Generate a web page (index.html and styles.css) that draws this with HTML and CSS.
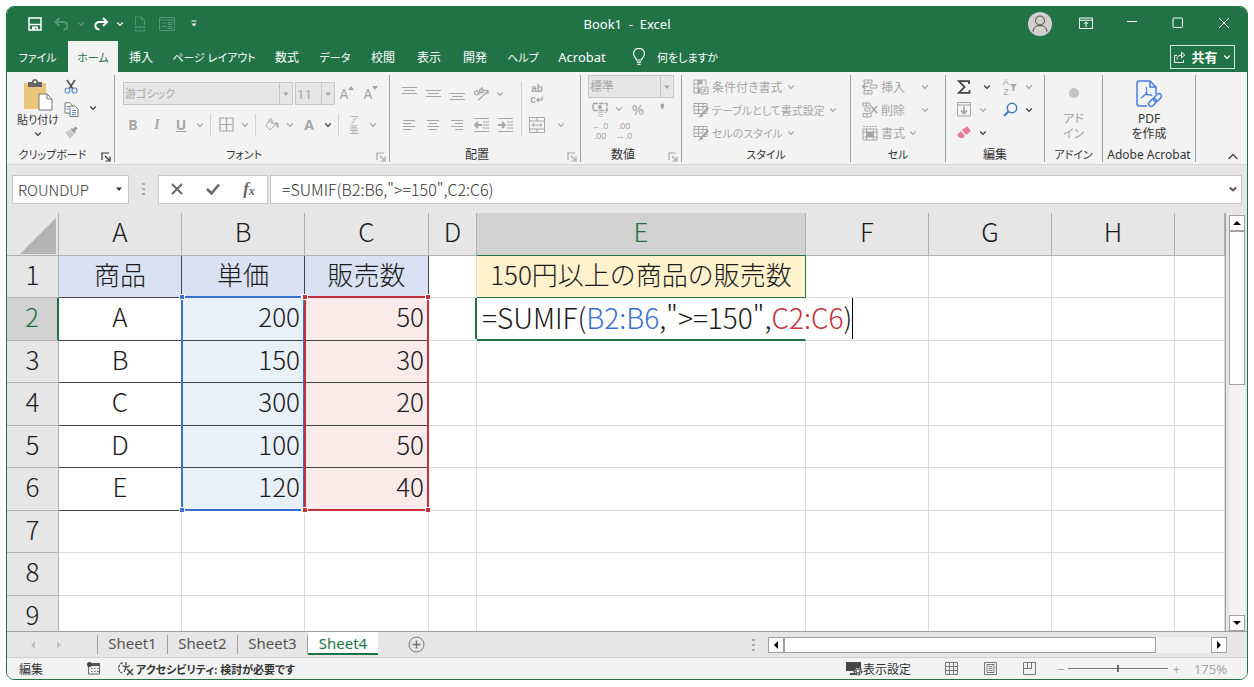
FILE: index.html
```html
<!DOCTYPE html>
<html lang="ja">
<head>
    <meta charset="UTF-8">
    <meta name="viewport" content="width=device-width, initial-scale=1.0">
    <title>Book1 - Excel</title>
    <link rel="stylesheet" href="styles.css">
</head>
<body>

    <!-- shared icons -->
    <svg class="defs" aria-hidden="true">
        <symbol id="chev" viewBox="0 0 8 8"><path d="M1.2 2.5 4 5.3 6.8 2.5" fill="none" stroke="currentColor" stroke-width="1.2"/></symbol>
        <symbol id="tri" viewBox="0 0 8 8"><path d="M1 2.5h6L4 6z" fill="currentColor"/></symbol>
        <symbol id="launch" viewBox="0 0 10 10"><path d="M1 8V1h7M4 4l4 4M9 4.500V9H4.500" fill="none" stroke="currentColor" stroke-width="1.2"/></symbol>
        <symbol id="table-brush" viewBox="0 0 16 16"><path d="M1 1.500h13v10H1zM1 4.500h13M1 8h9M5.500 1.500v10M10 1.500v6" fill="none" stroke="currentColor"/><path d="M14.500 4.500 16 6l-5 6-2-1.500zM8.500 11l2 1.800C10 15 8 15.500 5 15.500c2-1 2-3.500 3.500-4.500z" fill="currentColor"/></symbol>
    </svg>

    <div class="window">
        <header class="titlebar">
            <div class="quick">
                <button aria-label="上書き保存" class="tool"><svg width="14" height="14" viewBox="0 0 14 14"><path d="M1 1h12v12H1zM1 7.500h12" fill="none" stroke="currentColor" stroke-width="1.500"/><path d="M4 9.500h6V13H8.500v-2H7v2H4z" fill="currentColor"/></svg></button>
                <button aria-label="元に戻す" class="tool faded"><svg width="15" height="14" viewBox="0 0 15 14"><path d="M5.500 1 1.500 5l4 4M2 5h7.500c5 0 5 7.500 0 8" fill="none" stroke="currentColor" stroke-width="1.800"/></svg></button>
                <button aria-label="元に戻すの一覧" class="drop faded"><svg width="8" height="8"><use href="#chev"/></svg></button>
                <button aria-label="やり直し" class="tool"><svg width="16" height="14" viewBox="0 0 16 14"><path d="M10 1l4 4-4 4M14 5H6.500C1 5 1 12 6.500 12.500" fill="none" stroke="currentColor" stroke-width="2"/></svg></button>
                <button aria-label="やり直しの一覧" class="drop"><svg width="8" height="8"><use href="#chev"/></svg></button>
                <button aria-label="PDF" class="tool faded"><svg width="14" height="16" viewBox="0 0 14 16"><path d="M2.500 9V1h6l3 3v5M8.500 1v3h3M2.500 13v2h9v-2M1 11h12M3 9.500v3M7 9.500v3M11 9.500v3" fill="none" stroke="currentColor"/></svg></button>
                <button aria-label="フォーム" class="tool faded"><svg width="16" height="14" viewBox="0 0 16 14"><path d="M.5.5h15v13H.5zM.5 3h15M3 6h4M3 9.500h4M9 5.500h4v2H9zM9 9.500h4v2H9z" fill="none" stroke="currentColor"/></svg></button>
                <button aria-label="クイック アクセスのカスタマイズ" class="tool"><svg width="8" height="8" viewBox="0 0 8 8"><path d="M1.500 1h5" stroke="currentColor"/><path d="M1.500 3.500h5L4 6.500z" fill="currentColor"/></svg></button>
            </div>
            <h1>Book1&nbsp; -&nbsp; Excel</h1>
            <div class="caption">
                <span class="avatar"><svg width="24" height="24" viewBox="0 0 24 24" fill="none" stroke="#444"><circle cx="12" cy="8.500" r="4.500"/><path d="M5 19.500c.5-8 13.500-8 14 0"/></svg></span>
                <button aria-label="リボンの表示オプション"><svg width="14" height="12" viewBox="0 0 14 12" fill="none" stroke="currentColor"><path d="M.5 1h13v10.500H.5zM.5 3.200h13M7 10V5M4.800 7 7 4.800 9.200 7"/></svg></button>
                <button aria-label="最小化"><svg width="12" height="12" viewBox="0 0 12 12"><path d="M1 4.500h10" stroke="currentColor"/></svg></button>
                <button aria-label="最大化"><svg width="12" height="12" viewBox="0 0 12 12"><rect x="1" y="1" width="9.500" height="9.500" rx="1" fill="none" stroke="currentColor"/></svg></button>
                <button aria-label="閉じる"><svg width="12" height="12" viewBox="0 0 12 12"><path d="m1 1 10 10M11 1 1 11" stroke="currentColor"/></svg></button>
            </div>
        </header>

        <nav class="tabs">
            <button class="tab-file kana">ファイル</button>
            <button class="tab-md kana active">ホーム</button>
            <button>挿入</button>
            <button class="tab-wide kana">ページ レイアウト</button>
            <button>数式</button>
            <button class="tab-md kana">データ</button>
            <button>校閲</button>
            <button>表示</button>
            <button>開発</button>
            <button class="tab-md kana">ヘルプ</button>
            <button class="tab-lg">Acrobat</button>
            <button class="tell kana">
                <svg width="14" height="18" viewBox="0 0 14 18" fill="none" stroke="currentColor" stroke-width="1.200"><path d="M4.500 12c0-2-3-3-3-6.200a5.400 5.400 0 0 1 11 0c0 3.200-3 4.200-3 6.200zM4.800 14.200h4.500M5.500 16.300h3"/></svg>
                何をしますか
            </button>
            <button class="share">
                <svg width="12" height="12" viewBox="0 0 12 12" fill="none" stroke="currentColor"><path d="M3 4.500H.5v7h9V9M3 8.500c0-3 2-4.500 5-4.500M7.500 1.200 10.800 4 7.500 6.800V1.200"/></svg>
                共有
                <svg width="8" height="8"><use href="#chev"/></svg>
            </button>
        </nav>

        <section class="ribbon">
            <div class="group clipboard">
                <div class="tools">
                    <button class="paste kana">
                        <svg width="30" height="32" viewBox="0 0 30 32"><path d="M1 4h22v26H1z" fill="#eac57a"/><path d="M5 3h4c0-4 6-4 6 0h4v5H5z" fill="#666"/><circle cx="12" cy="3" r="1.200" fill="#fff"/><path d="M16 15h8l5 5v11H16z" fill="#fff" stroke="#777"/><path d="M24 15v5h5" fill="none" stroke="#777"/></svg>
                        貼り付け
                        <svg width="8" height="8"><use href="#chev"/></svg>
                    </button>
                    <div class="stack">
                        <button aria-label="切り取り"><svg width="14" height="15" viewBox="0 0 14 15" fill="none"><path d="M3 1l6 9M11 1 5 10" stroke="#555" stroke-width="1.600"/><circle cx="3.500" cy="11.500" r="2.500" stroke="#5b8fcb" stroke-width="1.200"/><circle cx="10.500" cy="11.500" r="2.500" stroke="#5b8fcb" stroke-width="1.200"/></svg></button>
                        <button aria-label="コピー"><svg width="15" height="15" viewBox="0 0 15 15" fill="#fff" stroke="#777"><path d="M1 .8h5l2.500 2.500V11H1z"/><path d="M6 4h5l3 3v7.500H6z"/><path d="M2.500 4.500h3M2.500 7h2.500M8 8.500h4M8 10.500h4M8 12.500h4" stroke="#5b8fcb"/></svg></button>
                        <button aria-label="書式のコピー" class="off"><svg width="14" height="13" viewBox="0 0 14 13"><path d="M1 6 6 4l4 4-4 5z" fill="#c8c8c8"/><path d="m6.500 3.500 4 4L12 6l-1-1 2.500-2.500L11.500.5 9 3l-1-1z" fill="#999"/></svg></button>
                    </div>
                    <button aria-label="コピーの一覧" class="drop"><svg width="8" height="8"><use href="#chev"/></svg></button>
                </div>
                <div class="caption-row kana"><span>クリップボード</span><button aria-label="クリップボードの設定"><svg width="10" height="10"><use href="#launch"/></svg></button></div>
            </div>

            <div class="group font off">
                <div class="tools rows">
                    <div class="row">
                        <span class="combo family kana"><select aria-label="フォント" disabled><option>游ゴシック</option></select><svg width="8" height="8"><use href="#tri"/></svg></span>
                        <span class="combo size"><select aria-label="フォント サイズ" disabled><option>11</option></select><svg width="8" height="8"><use href="#tri"/></svg></span>
                        <button class="tool letter">A<svg class="mark" width="6" height="4" viewBox="0 0 6 4"><path d="M0 4h6L3 0z" fill="currentColor"/></svg></button>
                        <button class="tool letter">A<svg class="mark" width="6" height="4" viewBox="0 0 6 4"><path d="M0 0h6L3 4z" fill="currentColor"/></svg></button>
                    </div>
                    <div class="row">
                        <button class="tool letter"><b>B</b></button>
                        <button class="tool letter serif"><i>I</i></button>
                        <button class="tool letter"><b><u>U</u></b></button>
                        <button aria-label="下線の種類" class="drop"><svg width="8" height="8"><use href="#chev"/></svg></button>
                        <span class="sep"></span>
                        <button aria-label="罫線" class="tool"><svg width="15" height="15" viewBox="0 0 15 15"><path d="M1 1h13v13H1zM7.500 1v13M1 7.500h13" fill="none" stroke="currentColor" stroke-width="1.200"/></svg></button>
                        <button aria-label="罫線の種類" class="drop"><svg width="8" height="8"><use href="#chev"/></svg></button>
                        <span class="sep"></span>
                        <button aria-label="塗りつぶし" class="tool"><svg width="15" height="14" viewBox="0 0 15 14" fill="none" stroke="currentColor"><path d="M6 2.500 1.500 7.500l4.500 4.500 5.500-5zM5 5V1.500c1-1.500 3-.5 3 .5v4"/><path d="M11 5c2 0 3 1.500 2.800 4.500" stroke-width="2"/></svg></button>
                        <button aria-label="塗りつぶしの色" class="drop"><svg width="8" height="8"><use href="#chev"/></svg></button>
                        <button class="tool letter"><b>A</b></button>
                        <button aria-label="フォントの色" class="drop on"><svg width="8" height="8"><use href="#chev"/></svg></button>
                        <span class="sep"></span>
                        <button class="tool ruby"><span>ア</span><span>亜</span></button>
                        <button aria-label="ふりがなの設定" class="drop"><svg width="8" height="8"><use href="#chev"/></svg></button>
                    </div>
                </div>
                <div class="caption-row kana"><span>フォント</span><button aria-label="フォントの設定"><svg width="10" height="10"><use href="#launch"/></svg></button></div>
            </div>

            <div class="group align off">
                <div class="tools">
                    <div class="rows">
                        <div class="row">
                            <button aria-label="上揃え" class="tool"><svg width="15" height="15" viewBox="0 0 15 15"><path d="M0 1.500h15M2 4.500h11M0 7.500h15" stroke="currentColor"/></svg></button>
                            <button aria-label="上下中央揃え" class="tool"><svg width="15" height="15" viewBox="0 0 15 15"><path d="M0 4.500h15M2 7.500h11M0 10.500h15" stroke="currentColor"/></svg></button>
                            <button aria-label="下揃え" class="tool"><svg width="15" height="15" viewBox="0 0 15 15"><path d="M0 7.500h15M2 10.500h11M0 13.500h15" stroke="currentColor"/></svg></button>
                            <button aria-label="方向" class="tool"><svg width="16" height="16" viewBox="0 0 16 16" fill="none" stroke="currentColor" stroke-width="1.200"><circle cx="3.500" cy="7" r="2"/><path d="m3.500 4.200 3 4M9 1l-.5 5.500"/><circle cx="8.500" cy="4.800" r="2"/><path d="M5 14.500 15 5M11 4.500h4v4"/></svg></button>
                            <button aria-label="方向の一覧" class="drop"><svg width="8" height="8"><use href="#chev"/></svg></button>
                        </div>
                        <div class="row">
                            <button aria-label="左揃え" class="tool"><svg width="12" height="12" viewBox="0 0 12 12"><path d="M0 1.500h12M0 4.500h8M0 7.500h12M0 10.500h8" stroke="currentColor"/></svg></button>
                            <button aria-label="中央揃え" class="tool"><svg width="12" height="12" viewBox="0 0 12 12"><path d="M0 1.500h12M2 4.500h8M0 7.500h12M2 10.500h8" stroke="currentColor"/></svg></button>
                            <button aria-label="右揃え" class="tool"><svg width="12" height="12" viewBox="0 0 12 12"><path d="M0 1.500h12M4 4.500h8M0 7.500h12M4 10.500h8" stroke="currentColor"/></svg></button>
                            <button aria-label="インデントを減らす" class="tool"><svg width="15" height="14" viewBox="0 0 15 14"><path d="M0 .5h15M9 4h6M9 7h6M9 10h6M0 13.500h15" stroke="currentColor"/><path d="M1 7h7M4 4 1 7l3 3" fill="none" stroke="currentColor" stroke-width="1.800"/></svg></button>
                            <button aria-label="インデントを増やす" class="tool"><svg width="15" height="14" viewBox="0 0 15 14"><path d="M0 .5h15M9 4h6M9 7h6M9 10h6M0 13.500h15" stroke="currentColor"/><path d="M0 7h7M4 4l3 3-3 3" fill="none" stroke="currentColor" stroke-width="1.800"/></svg></button>
                        </div>
                    </div>
                    <span class="sep tall"></span>
                    <div class="rows">
                        <div class="row">
                            <button class="tool wrap"><span>ab</span><span>c↵</span></button>
                        </div>
                        <div class="row">
                            <button aria-label="セルを結合して中央揃え" class="tool"><svg width="16" height="16" viewBox="0 0 16 16" fill="none" stroke="currentColor"><path d="M.5.500h15v15H.5zM.5 4h15M.5 12h15M8 .5V4M8 12v3.500M3 8h10M5 6 3 8l2 2M11 6l2 2-2 2"/></svg></button>
                            <button aria-label="結合の一覧" class="tool"><svg width="8" height="8"><use href="#chev"/></svg></button>
                        </div>
                    </div>
                </div>
                <div class="caption-row"><span>配置</span><button aria-label="配置の設定"><svg width="10" height="10"><use href="#launch"/></svg></button></div>
            </div>

            <div class="group number off">
                <div class="tools list">
                    <span class="combo"><select aria-label="表示形式" disabled><option>標準</option></select><svg width="8" height="8"><use href="#tri"/></svg></span>
                    <div class="row">
                        <button aria-label="通貨表示形式" class="tool"><svg width="16" height="15" viewBox="0 0 16 15"><path d="M1 1.500h14v7H1z" fill="none" stroke="currentColor" stroke-width="1.500" stroke-dasharray="5 1"/><circle cx="8" cy="5" r="2" fill="currentColor"/><path d="M6 10.500h5M6 12.500h5M6 14.500h5M12 10.500h3" stroke="currentColor" opacity=".6"/></svg></button>
                        <button aria-label="通貨の一覧" class="drop"><svg width="8" height="8"><use href="#chev"/></svg></button>
                        <button class="tool pct">%</button>
                        <button class="tool pct"><b>❜</b></button>
                    </div>
                    <div class="row">
                        <button class="tool dec"><span>←.0</span><span>.00</span></button>
                        <button class="tool dec"><span>.00</span><span>→.0</span></button>
                    </div>
                </div>
                <div class="caption-row"><span>数値</span><button aria-label="数値の設定"><svg width="10" height="10"><use href="#launch"/></svg></button></div>
            </div>

            <div class="group styles off">
                <div class="tools list">
                    <button class="item"><svg width="16" height="16" viewBox="0 0 16 16"><path d="M1 1h12v5M1 1v13h6M1 5h6M1 9h6M5 1v13M9 1v5M8 8h7v7H8z" fill="none" stroke="currentColor"/><path d="M5 1h4v4H5zM5 9h2v5H5z" fill="currentColor"/><path d="M9.500 10.500h4M9.500 12.500h4M13 9l-3 5" stroke="currentColor" stroke-width=".8"/></svg>条件付き書式<svg width="8" height="8"><use href="#chev"/></svg></button>
                    <button class="item kana"><svg width="16" height="16"><use href="#table-brush"/></svg>テーブルとして書式設定<svg width="8" height="8"><use href="#chev"/></svg></button>
                    <button class="item kana"><svg width="16" height="16"><use href="#table-brush"/></svg>セルのスタイル<svg width="8" height="8"><use href="#chev"/></svg></button>
                </div>
                <div class="caption-row kana"><span>スタイル</span></div>
            </div>

            <div class="group cells off">
                <div class="tools list">
                    <button class="item spread"><svg width="16" height="16" viewBox="0 0 16 16" fill="none" stroke="currentColor"><path d="M2 1h8v3H2zM6 1v3M2 11.500h8v3.500H2zM6 11.500V15M8 6h7v3H8z"/><path d="M0 7.500h6M3 5 .8 7.500 3 10" stroke-width="1.500"/></svg>挿入<svg width="8" height="8"><use href="#chev"/></svg></button>
                    <button class="item spread"><svg width="16" height="16" viewBox="0 0 16 16" fill="none" stroke="currentColor"><path d="M1 1h7v3H1zM4.500 1v3M1 11.500h8v3.500H1zM5 11.500V15M3 6h5v3H3z"/><path d="m9 4 6 7M15 4 9 11" stroke-width="1.500"/></svg>削除<svg width="8" height="8"><use href="#chev"/></svg></button>
                    <button class="item"><svg width="16" height="16" viewBox="0 0 16 16" fill="none" stroke="currentColor"><path d="M1 1.500h14" stroke-dasharray="2 1"/><path d="M1 4h14v11H1zM1 7h14M1 12h14M4.500 4v11M11.500 4v11"/><path d="M5.500 7.500h5v4h-5z" fill="currentColor"/></svg>書式<svg width="8" height="8"><use href="#chev"/></svg></button>
                </div>
                <div class="caption-row kana"><span>セル</span></div>
            </div>

            <div class="group edit">
                <div class="tools">
                    <div class="list">
                        <div class="row">
                            <button aria-label="合計" class="tool"><svg width="14" height="14" viewBox="0 0 14 14"><path d="M12 4V1.200H2L7.500 7 2 12.800h10.500V10" fill="none" stroke="#444" stroke-width="1.800"/></svg></button>
                            <button aria-label="合計の一覧" class="drop far"><svg width="8" height="8"><use href="#chev"/></svg></button>
                        </div>
                        <div class="row off">
                            <button aria-label="フィル" class="tool"><svg width="14" height="15" viewBox="0 0 14 15" fill="none" stroke="currentColor"><path d="M.5.500h13v13.500H.5zM.5 3h13"/><path d="M7 4.500v7M4 8.500l3 3 3-3" stroke-width="1.800"/></svg></button>
                            <button aria-label="フィルの一覧" class="drop"><svg width="8" height="8"><use href="#chev"/></svg></button>
                        </div>
                        <div class="row">
                            <button aria-label="クリア" class="tool"><svg width="14" height="13" viewBox="0 0 14 13"><path d="m5 4 5-4 4 5-5 4zM4 5l4 5-2 2H3L0 9z" fill="#e57f92"/></svg></button>
                            <button aria-label="クリアの一覧" class="drop"><svg width="8" height="8"><use href="#chev"/></svg></button>
                        </div>
                    </div>
                    <div class="list">
                        <div class="row off">
                            <button class="tool sort"><span class="az"><span>A</span><span>Z</span></span><svg width="7" height="8" viewBox="0 0 7 8"><path d="M0 1h7L4.500 4v4h-2V4z" fill="currentColor"/></svg></button>
                            <button aria-label="並べ替えとフィルター" class="drop"><svg width="8" height="8"><use href="#chev"/></svg></button>
                        </div>
                        <div class="row">
                            <button aria-label="検索と選択" class="tool"><svg width="15" height="15" viewBox="0 0 15 15" fill="none" stroke="#3f78b5"><circle cx="9" cy="6" r="4.700" stroke-width="1.500"/><path d="M5.500 9.500 1 14" stroke-width="2"/></svg></button>
                            <button aria-label="検索の一覧" class="drop"><svg width="8" height="8"><use href="#chev"/></svg></button>
                        </div>
                    </div>
                </div>
                <div class="caption-row"><span>編集</span></div>
            </div>

            <div class="group addin off">
                <div class="tools">
                    <button class="big"><svg width="30" height="30" viewBox="0 0 30 30"><circle cx="15" cy="14" r="5" fill="#c4c4c4"/></svg><span>アド</span><span>イン</span></button>
                </div>
                <div class="caption-row kana"><span>アドイン</span></div>
            </div>

            <div class="group acrobat">
                <div class="tools">
                    <button class="big"><svg width="28" height="30" viewBox="0 0 28 30" fill="none" stroke="#4a7fe0" stroke-width="1.500"><path d="M12 27H4.500C3 27 2 26 2 24.500v-20C2 3 3 2 4.500 2H15l6 6v7M15 2v6h6"/><path d="M11 8c2 5 1 7-5 11M10.500 13c2 3 4 4 7 3M8 17c3-2 5-2 9-1" stroke-width="1.200"/><rect x="20" y="14" width="5" height="9" rx="2.500" transform="rotate(45 22.500 18.500)"/><rect x="15" y="19" width="5" height="9" rx="2.500" transform="rotate(45 17.500 23.500)"/></svg><span>PDF</span><span>を作成</span></button>
                </div>
                <div class="caption-row"><span>Adobe Acrobat</span></div>
            </div>

            <button aria-label="リボンを折りたたむ" class="collapse"><svg width="12" height="8" viewBox="0 0 12 8"><path d="m1.500 6 4.500-4.500L10.500 6" fill="none" stroke="#444" stroke-width="1.300"/></svg></button>
        </section>

        <section class="formula-bar">
            <div class="name-box">
                <input type="text" aria-label="名前ボックス" value="ROUNDUP">
                <svg width="8" height="8"><use href="#tri"/></svg>
            </div>
            <span class="grip"></span>
            <div class="fx-buttons">
                <button aria-label="キャンセル"><svg width="12" height="12" viewBox="0 0 12 12"><path d="m1 1 10 10M11 1 1 11" stroke="#666" stroke-width="2"/></svg></button>
                <button aria-label="入力"><svg width="14" height="12" viewBox="0 0 14 12"><path d="m1 6 4.500 4.500L13 1.500" fill="none" stroke="#666" stroke-width="2.500"/></svg></button>
                <button class="fx">f<small>x</small></button>
            </div>
            <div class="formula">
                <input type="text" aria-label="数式バー" value='=SUMIF(B2:B6,"&gt;=150",C2:C6)'>
                <svg width="8" height="8" viewBox="0 0 8 8"><path d="M.8 2.500 4 5.500l3.200-3" fill="none" stroke="#555" stroke-width="2"/></svg>
            </div>
        </section>

        <main class="sheet">
            <div class="cells-area">
                <table>
                    <colgroup>
                        <col class="c-head"><col class="c"><col class="c"><col class="c-c"><col class="c-d"><col class="c-e"><col class="c"><col class="c"><col class="c"><col>
                    </colgroup>
                    <thead>
                        <tr>
                            <th class="corner"><svg width="36" height="36" viewBox="0 0 36 36"><path d="M36 0v36H0z" fill="#b4b4b4"/></svg></th>
                            <th>A</th><th>B</th><th>C</th><th>D</th><th class="current">E</th><th>F</th><th>G</th><th>H</th><th></th>
                        </tr>
                    </thead>
                    <tbody>
                        <tr>
                            <th>1</th>
                            <td class="head">商品</td><td class="head">単価</td><td class="head">販売数</td><td></td>
                            <td class="title">150円以上の商品の販売数</td><td></td><td></td><td></td><td></td>
                        </tr>
                        <tr>
                            <th class="current">2</th>
                            <td class="item-name">A</td>
                            <td class="price">200<span class="range blue"><i></i><i></i><i></i><i></i></span></td>
                            <td class="sold">50<span class="range red"><i></i><i></i><i></i><i></i></span></td>
                            <td></td>
                            <td class="editing"><div class="editor">=SUMIF(<span class="ref-b">B2:B6</span>,"&gt;=150",<span class="ref-c">C2:C6</span>)</div></td>
                            <td></td><td></td><td></td><td></td>
                        </tr>
                        <tr><th>3</th><td class="item-name">B</td><td class="price">150</td><td class="sold">30</td><td></td><td></td><td></td><td></td><td></td><td></td></tr>
                        <tr><th>4</th><td class="item-name">C</td><td class="price">300</td><td class="sold">20</td><td></td><td></td><td></td><td></td><td></td><td></td></tr>
                        <tr><th>5</th><td class="item-name">D</td><td class="price">100</td><td class="sold">50</td><td></td><td></td><td></td><td></td><td></td><td></td></tr>
                        <tr><th>6</th><td class="item-name">E</td><td class="price">120</td><td class="sold">40</td><td></td><td></td><td></td><td></td><td></td><td></td></tr>
                        <tr><th>7</th><td></td><td></td><td></td><td></td><td></td><td></td><td></td><td></td><td></td></tr>
                        <tr><th>8</th><td></td><td></td><td></td><td></td><td></td><td></td><td></td><td></td><td></td></tr>
                        <tr><th>9</th><td></td><td></td><td></td><td></td><td></td><td></td><td></td><td></td><td></td></tr>
                    </tbody>
                </table>
            </div>
            <div class="vscroll">
                <button aria-label="上へ"><svg width="8" height="8" viewBox="0 0 8 8"><path d="M0 6h8L4 2z"/></svg></button>
                <div class="track"><div class="thumb"></div></div>
                <button aria-label="下へ"><svg width="8" height="8" viewBox="0 0 8 8"><path d="M0 2h8L4 6z"/></svg></button>
            </div>
        </main>

        <div class="sheet-tabs">
            <button aria-label="前のシート" class="nav"><svg width="8" height="8" viewBox="0 0 8 8"><path d="M6 0v8L2 4z"/></svg></button>
            <button aria-label="次のシート" class="nav"><svg width="8" height="8" viewBox="0 0 8 8"><path d="M2 0v8l4-4z"/></svg></button>
            <button class="sheet-tab first">Sheet1</button>
            <button class="sheet-tab">Sheet2</button>
            <button class="sheet-tab">Sheet3</button>
            <button class="sheet-tab active">Sheet4</button>
            <button aria-label="新しいシート" class="add"><svg width="17" height="17" viewBox="0 0 17 17" fill="none" stroke="#777"><circle cx="8.500" cy="8.500" r="7.500"/><path d="M8.500 4.500v8M4.500 8.500h8" stroke-width="1.500"/></svg></button>
            <span class="grip"></span>
            <div class="hscroll">
                <button aria-label="左へ"><svg width="8" height="8" viewBox="0 0 8 8"><path d="M6 0v8L2 4z"/></svg></button>
                <div class="track"><div class="thumb"></div></div>
                <button aria-label="右へ"><svg width="8" height="8" viewBox="0 0 8 8"><path d="M2 0v8l4-4z"/></svg></button>
            </div>
        </div>

        <footer class="status">
            <span class="mode">編集</span>
            <button aria-label="マクロの記録" class="macro"><svg width="13" height="13" viewBox="0 0 13 13"><path d="M1.500 4v8h11V4M4 6.500h1.500M7 6.500h1.500M10 6.500h1.500M4 9.500h1.500M7 9.500h1.500M10 9.500h1.500" fill="none" stroke="#666"/><path d="M4 1h9v3H4z" fill="#555"/><circle cx="2.500" cy="2.500" r="2.500" fill="#444"/></svg></button>
            <button class="access kana"><svg width="16" height="15" viewBox="0 0 16 15" fill="none" stroke="#444" stroke-width="1.200"><path d="M5 1.500C-1 4-.5 10 4 12" stroke-dasharray="3 1"/><path d="M8 1v5M4.500 4.500 8 6.500l4-2M8 6.500 6 11"/><path d="m9 8 6 6M15 8l-6 6" stroke-width="1.500"/></svg>アクセシビリティ: 検討が必要です</button>
            <button class="display"><svg width="17" height="15" viewBox="0 0 17 15"><path d="M0 1h15v9H0zM4 12h6v2H4z" fill="#444"/><circle cx="12" cy="10" r="3.500" fill="#f3f3f3" stroke="#444" stroke-width="2" stroke-dasharray="2 1"/><circle cx="12" cy="10" r="2" fill="none" stroke="#444"/></svg>表示設定</button>
            <div class="views">
                <button aria-label="標準"><svg width="13" height="13" viewBox="0 0 13 13" fill="none" stroke="#777"><path d="M.5.500h12v12H.5zM4.500.5v12M8.500.5v12M.5 4.500h12M.5 8.500h12"/></svg></button>
                <button aria-label="ページ レイアウト"><svg width="13" height="13" viewBox="0 0 13 13" fill="none" stroke="#777"><path d="M.5.500h12v12H.5zM3 2.500h7v8H3zM4.500 4.500h4M4.500 6.500h4M4.500 8.500h4"/></svg></button>
                <button aria-label="改ページ プレビュー"><svg width="13" height="13" viewBox="0 0 13 13" fill="none" stroke="#777"><path d="M.5.500h12v12H.5zM4.500.5v6M8.500.5v6M.5 6.500h8"/></svg></button>
            </div>
            <div class="zoom">
                <button aria-label="縮小">−</button>
                <input type="range" aria-label="ズーム" min="0" max="100" value="50">
                <button aria-label="拡大">+</button>
                <span class="percent">175%</span>
            </div>
        </footer>
    </div>

</body>
</html>
```
FILE: styles.css
```css
* {
    box-sizing: border-box;
}
body {
    margin: 0;
    padding: 6px 6px 7px;
    background: #fff;
    color: #333;
    font-family: "Noto Sans", "Noto Sans CJK JP", sans-serif;
    font-size: 12px;
    font-feature-settings: "palt";
}
button, input, select {
    margin: 0;
    padding: 0;
    border: none;
    background: none;
    color: inherit;
    font: inherit;
    font-feature-settings: inherit;
}
button {
    display: flex;
    align-items: center;
    justify-content: center;
    flex: none;
    white-space: nowrap;
    cursor: pointer;
}
svg {
    display: block;
    flex: none;
}
.defs {
    position: absolute;
    width: 0;
    height: 0;
}
.kana {
    font-size: 11px;
}
.window {
    display: flex;
    flex-direction: column;
    height: calc(100vh - 13px);
    min-height: 400px;
    border: 1px solid #217346;
    border-radius: 8px;
    background: #e6e6e6;
    overflow: hidden;
}

/* title bar */
.titlebar {
    display: grid;
    grid-template-columns: 1fr auto 1fr;
    align-items: center;
    height: 34px;
    background: #217346;
    color: #fff;
}
.quick {
    display: flex;
    padding-left: 14px;
}
.quick .faded {
    color: #4f9a70;
}
.quick .tool {
    width: 27px;
}
.quick .drop {
    width: 12px;
}
.titlebar h1 {
    margin: 0;
    font-size: 13px;
    font-weight: 400;
}
.caption {
    display: flex;
    align-items: center;
    justify-content: flex-end;
}
.caption button {
    width: 46px;
    height: 30px;
    padding-bottom: 3px;
}
.avatar {
    width: 24px;
    height: 24px;
    margin-right: 11px;
    border-radius: 50%;
    background: #d2d0ce;
}

/* ribbon tabs */
.tabs {
    display: flex;
    flex: none;
    height: 31px;
    padding-right: 12px;
    background: #217346;
    color: #fff;
}
.tabs button {
    width: 46px;
}
.tabs .tab-file {
    width: 61px;
}
.tabs .tab-md {
    width: 50px;
}
.tabs .tab-wide {
    width: 100px;
}
.tabs .tab-lg {
    width: 68px;
    font-size: 13px;
}
.tabs .active {
    background: #f3f3f3;
    color: #217346;
}
.tabs .tell {
    width: auto;
    gap: 11px;
    padding-left: 16px;
}
.tabs .share {
    align-self: center;
    width: 65px;
    height: 24px;
    margin-left: auto;
    gap: 5px;
    border: 1px solid #cfe3d7;
    font-size: 13px;
    font-weight: 700;
}

/* ribbon */
.ribbon {
    display: flex;
    flex: none;
    height: 93px;
    padding: 3px 0;
    border-bottom: 1px solid #d8d8d8;
    background: #f3f3f3;
}
.group {
    display: flex;
    flex: none;
    flex-direction: column;
    border-right: 1px solid #a0a0a0;
}
.off {
    color: #a6a6a6;
}
.tools {
    display: flex;
    flex: 1;
}
.row {
    display: flex;
    align-items: center;
}
.rows {
    display: flex;
    flex-direction: column;
    gap: 8px;
    padding-top: 7px;
}
.rows .row {
    height: 23px;
}
.tools.rows {
    justify-content: flex-start;
}
.list {
    display: flex;
    flex-direction: column;
}
.list .row, .list .item {
    height: 23px;
}
.tool {
    width: 24px;
}
.drop {
    width: 14px;
}
.drop.on {
    color: #333;
}
.sep {
    width: 1px;
    height: 22px;
    margin: 0 3px;
    background: #d0d0d0;
}
.sep.tall {
    height: 54px;
    margin: 7px 3px;
}
.caption-row {
    display: flex;
    align-items: flex-end;
    height: 16px;
    line-height: 14px;
    color: #333;
    white-space: nowrap;
}
.caption-row span {
    flex: 1;
    text-align: center;
}
.caption-row button {
    width: 16px;
}
.off .caption-row button {
    color: #a6a6a6;
}
.ribbon .group {
    height: 87px;
}
.clipboard {
    width: 108px;
}
.paste {
    flex-direction: column;
    justify-content: flex-start;
    width: 48px;
    margin-left: 7px;
    padding-top: 4px;
    line-height: 18px;
}
.paste svg:last-child {
    margin-top: 1px;
}
.stack {
    display: flex;
    flex-direction: column;
    width: 18px;
}
.stack button {
    height: 23px;
}
.clipboard .drop {
    height: 66px;
    margin-left: 6px;
}
.font {
    width: 275px;
}
.font .row {
    padding-left: 6px;
}
.combo {
    display: flex;
    align-items: center;
    flex: none;
    height: 23px;
    border: 1px solid #c6c6c6;
    background: #e6e6e6;
}
.combo select {
    flex: 1;
    min-width: 0;
    height: 21px;
    padding-left: 1px;
    border-right: 1px solid #c6c6c6;
    appearance: none;
    opacity: 1;
}
.combo svg {
    margin: 0 2px;
}
.font .combo {
    margin-left: 2px;
}
.family {
    width: 170px;
}
.size {
    width: 40px;
    font-size: 13px;
}
.letter {
    font-size: 14px;
}
.letter .mark {
    align-self: flex-start;
    margin-top: 2px;
}
.serif {
    font-family: "Liberation Serif", serif;
    font-weight: 700;
}
.ruby, .wrap, .dec, .az {
    display: flex;
    flex-direction: column;
    font-family: "Liberation Sans", "Noto Sans CJK JP", sans-serif;
    font-size: 9px;
    line-height: 10px;
}
.wrap {
    font-size: 10px;
    font-weight: 700;
    line-height: 11px;
}
.align {
    width: 191px;
}
.align .tools {
    padding-left: 7px;
}
.align .tools > .rows:first-child {
    width: 121px;
}
.number {
    width: 101px;
}
.number .tools {
    padding-left: 7px;
}
.number .combo {
    width: 86px;
}
.number .row {
    height: 22px;
}
.pct {
    font-size: 15px;
}
.styles {
    width: 169px;
}
.styles .tools, .cells .tools {
    padding-left: 11px;
}
.item {
    justify-content: flex-start;
    gap: 3px;
}
.item svg:last-child {
    margin-left: 1px;
}
.cells {
    width: 95px;
}
.spread {
    width: 67px;
}
.spread svg:last-child {
    margin-left: auto;
}
.edit {
    width: 99px;
}
.edit .tools {
    padding-left: 6px;
}
.edit .far {
    width: 22px;
}
.sort {
    gap: 1px;
}
.addin {
    width: 58px;
}
.acrobat {
    width: 93px;
}
.big {
    flex: 1;
    flex-direction: column;
    justify-content: flex-start;
    padding-top: 4px;
    line-height: 15px;
}
.big svg {
    margin-bottom: 2px;
}
.collapse {
    align-self: flex-end;
    width: 20px;
    height: 8px;
    margin: 0 4px 0 auto;
}

/* formula bar */
.formula-bar {
    display: flex;
    flex: none;
    align-items: center;
    height: 48px;
    padding: 0 5px;
}
.name-box, .fx-buttons, .formula {
    display: flex;
    align-items: center;
    height: 29px;
    border: 1px solid #c8c8c8;
    background: #fff;
}
.name-box {
    width: 117px;
    padding: 0 5px;
    font-family: "Noto Sans CJK JP", sans-serif;
    font-size: 15px;
}
.name-box input, .formula input {
    flex: 1;
    min-width: 0;
    font-weight: 300;
}
.grip {
    width: 3px;
    height: 12px;
    margin: 0 13px;
    background: repeating-linear-gradient(#aaa 0 2px, transparent 2px 5px);
}
.fx-buttons {
    width: 110px;
}
.fx-buttons button {
    flex: 1;
}
.fx {
    font-family: "Liberation Serif", serif;
    font-size: 17px;
    font-style: italic;
    font-weight: 700;
    color: #666;
}
.fx small {
    font-size: 12px;
    align-self: flex-end;
}
.formula {
    flex: 1;
    margin-left: 2px;
    padding: 0 4px 0 11px;
    font-family: "Noto Sans CJK JP", sans-serif;
    font-size: 16px;
}
.formula input {
    font-feature-settings: normal;
}

/* sheet */
.sheet {
    display: flex;
    flex: 1;
    min-height: 0;
}
.cells-area {
    flex: 1;
    min-width: 0;
    overflow: hidden;
    border-right: 1px solid #a0a0a0;
}
table {
    width: 100%;
    border-collapse: separate;
    border-spacing: 0;
    table-layout: fixed;
    background: #fff;
    color: #1a1a1a;
    font-family: "Noto Sans CJK JP", sans-serif;
    font-size: 26px;
    font-weight: 300;
    font-feature-settings: normal;
    line-height: 30px;
}
.c-head {
    width: 52px;
}
.c {
    width: 123px;
}
.c-c {
    width: 124px;
}
.c-d {
    width: 48px;
}
.c-e {
    width: 329px;
}
tr {
    height: 42px;
}
thead tr {
    height: 43px;
}
tbody tr:nth-child(even) {
    height: 43px;
}
th, td {
    padding: 0 4px 6px;
    border-right: 1px solid #dadada;
    border-bottom: 1px solid #dadada;
    white-space: nowrap;
}
th {
    border-color: #b0b0b0;
    background: #e6e6e6;
    font-weight: 300;
}
th.current {
    background: #d2d2d2;
    color: #217346;
}
thead th.current {
    border-bottom-color: #217346;
}
tbody th.current {
    border-right: 2px solid #217346;
}
.corner {
    padding: 4px 2px 0 0;
}
.corner svg {
    margin-left: auto;
}
td.head, td.title, td.item-name {
    text-align: center;
}
td.head, td.item-name, td.price, td.sold {
    border-color: #444;
}
td.head {
    background: #d9e1f2;
}
td.title {
    border-color: #217346;
    background: #fff2cc;
}
td.price, td.sold, td.editing {
    position: relative;
    text-align: right;
}
td.price {
    background: #e9f0fa;
}
td.sold {
    background: #faeaea;
}
/* outline over rows 2 to 6 */
.range {
    position: absolute;
    top: -2px;
    left: -1px;
    width: calc(100% + 2px);
    height: 215px;
    border: 2px solid #3a6fcf;
    z-index: 1;
}
.range.red {
    border-color: #c4303c;
}
.range i {
    position: absolute;
    width: 6px;
    height: 6px;
    border: 1px solid #fff;
    background: #3a6fcf;
}
.range.red i {
    background: #c4303c;
}
.range i:nth-child(1) { top: -4px; left: -4px; }
.range i:nth-child(2) { top: -4px; right: -4px; }
.range i:nth-child(3) { bottom: -4px; left: -4px; }
.range i:nth-child(4) { bottom: -4px; right: -4px; }
td.editing {
    border-bottom: 2px solid #217346;
}
/* the formula runs past the cell while it is typed */
.editor {
    position: absolute;
    top: 0;
    left: -2px;
    height: 41px;
    padding-left: 5px;
    border-left: 2px solid #217346;
    border-right: 1px solid #000;
    background: #fff;
    font-size: 28px;
    line-height: 38px;
    z-index: 1;
}
.ref-b {
    color: #3a6fcf;
}
.ref-c {
    color: #c4303c;
}
.vscroll {
    display: flex;
    flex-direction: column;
    width: 21px;
    padding: 2px 2px 0 3px;
}
.vscroll button, .hscroll button {
    width: 16px;
    height: 16px;
    border: 1px solid #a0a0a0;
    background: #fff;
}
.track {
    flex: 1;
    background: #f2f2f2;
}
.thumb {
    border: 1px solid #a0a0a0;
    background: #fff;
}
.vscroll .thumb {
    height: 40%;
}

/* sheet tabs */
.sheet-tabs {
    display: flex;
    flex: none;
    align-items: center;
    height: 26px;
    padding: 0 20px 0 13px;
    border-top: 1px solid #a0a0a0;
}
.nav {
    width: 26px;
    fill: #c0c0c0;
}
.sheet-tab {
    width: 70px;
    height: 19px;
    padding-bottom: 3px;
    border-right: 1px solid #a0a0a0;
    font-size: 15px;
    color: #555;
}
.sheet-tab.first {
    width: 71px;
    margin-left: 25px;
    border-left: 1px solid #a0a0a0;
}
.sheet-tab.active {
    align-self: flex-start;
    height: 23px;
    padding: 0;
    border-right: none;
    border-bottom: 2px solid #217346;
    background: #fff;
    color: #217346;
}
.add {
    margin-left: 30px;
}
.sheet-tabs .grip {
    margin-left: auto;
}
.hscroll {
    display: flex;
    width: 38%;
}
.hscroll .thumb {
    width: 87%;
    height: 16px;
}

/* status bar */
.status {
    display: flex;
    flex: none;
    align-items: center;
    height: 22px;
    padding: 0 20px 0 12px;
    border-top: 1px solid #d0d0d0;
    background: #f3f3f3;
}
.macro {
    margin: 0 18px 0 44px;
}
.access {
    gap: 2px;
    font-weight: 700;
}
.display {
    margin-left: auto;
}
.views {
    display: flex;
    gap: 26px;
    margin: 0 21px 0 34px;
}
.zoom {
    display: flex;
    align-items: center;
    gap: 4px;
    color: #a6a6a6;
    font-size: 13px;
}
.zoom input {
    width: 100px;
    height: 12px;
    appearance: none;
    background: linear-gradient(#777, #777) center / 100% 1px no-repeat;
}
.zoom input::-webkit-slider-thumb {
    appearance: none;
    width: 2px;
    height: 7px;
    background: #666;
}
.percent {
    margin-left: 10px;
}
```
